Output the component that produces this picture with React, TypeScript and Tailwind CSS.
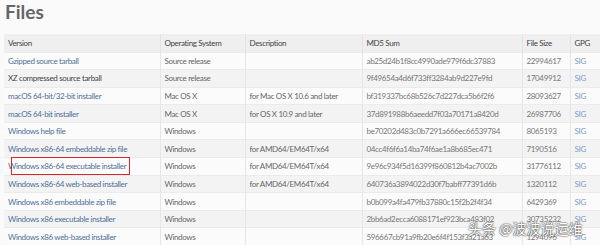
const rows: [string, boolean, string, string, string, string][] = [
  ['Gzipped source tarball', true, 'Source release', '', 'ab25d24b1f8cc4990ade979f6dc37883', '22994617'],
  ['XZ compressed source tarball', false, 'Source release', '', '9f49654a4d6f733ff3284ab9d227e9fd', '17049912'],
  ['macOS 64-bit/32-bit installer', true, 'Mac OS X', 'for Mac OS X 10.6 and later', 'bf319337bc68b526c7d227dca5b6f2f6', '28093627'],
  ['macOS 64-bit installer', true, 'Mac OS X', 'for OS X 10.9 and later', '37d891988b6aeedd7f03a70171a8420d', '26987706'],
  ['Windows help file', true, 'Windows', '', 'be70202d483c0b7291a666ec66539784', '8065193'],
  ['Windows x86-64 embeddable zip file', true, 'Windows', 'for AMD64/EM64T/x64', '04cc4f6f6a14ba74f6ae1a8b685ec471', '7190516'],
  ['Windows x86-64 executable installer', true, 'Windows', 'for AMD64/EM64T/x64', '9e96c934f5d16399f860812b4ac7002b', '31776112'],
  ['Windows x86-64 web-based installer', true, 'Windows', 'for AMD64/EM64T/x64', '640736a3894022d30f7babff77391d6b', '1320112'],
  ['Windows x86 embeddable zip file', true, 'Windows', '', 'b0b099a4fa479fb37880c15f2b2f4f34', '6429369'],
  ['Windows x86 executable installer', true, 'Windows', '', '2bb6ad2ecca6088171ef923bca483f02', '30735232'],
  ['Windows x86 web-based installer', true, 'Windows', '', '596667cb91a9fb20e6f4f153f3a21a63', '1294096'],
]

export default function App() {
  return (
    <div className="relative w-[600px] h-[245px] overflow-hidden bg-[#fafafa] font-['Lato','Liberation_Sans',sans-serif]">
      <div className="h-[34px] pl-[5px] pt-[1px] text-[19px] leading-[22px] font-bold text-[#666]">Files</div>
      <div className="ml-[4px] h-[211px] overflow-hidden">
        <table className="table-fixed border-collapse text-[8px] tracking-[-0.35px] w-[600px]">
          <colgroup>
            <col className="w-[156px]" />
            <col className="w-[85px]" />
            <col className="w-[117px]" />
            <col className="w-[160px]" />
            <col className="w-[48px]" />
            <col className="w-[34px]" />
          </colgroup>
          <thead>
            <tr className="h-[18px] bg-[#efefef] text-[#444] text-left">
              <th className="font-normal pl-[4px] border-r border-[#e2e2e2]">Version</th>
              <th className="font-normal pl-[4px] border-r border-[#e2e2e2]">Operating System</th>
              <th className="font-normal pl-[4px] border-r border-[#e2e2e2]">Description</th>
              <th className="font-normal pl-[4px] border-r border-[#e2e2e2]">MD5 Sum</th>
              <th className="font-normal pl-[4px] border-r border-[#e2e2e2]">File Size</th>
              <th className="font-normal pl-[4px]">GPG</th>
            </tr>
          </thead>
          <tbody>
            {rows.map(([name, link, os, desc, md5, size], i) => (
              <tr
                key={name}
                className={`h-[17.6px] border-t border-[#ebebeb] ${i % 2 === 0 ? 'bg-[#fbfbfb]' : 'bg-[#f3f3f3]'}`}
              >
                <td className="pl-[4px] border-r border-[#e6e6e6] whitespace-nowrap">
                  {i === 6 ? (
                    <span className="relative text-[#4f6f9a]">
                      {name}
                      <span className="absolute left-[3px] -right-[4px] -top-[4px] -bottom-[4px] border-[1.5px] border-[#d8262a]" />
                    </span>
                  ) : (
                    <span className={link ? 'text-[#4f6f9a]' : 'text-[#444]'}>{name}</span>
                  )}
                </td>
                <td className="pl-[4px] border-r border-[#e6e6e6] text-[#666]">{os}</td>
                <td className="pl-[4px] border-r border-[#e6e6e6] text-[#666] whitespace-nowrap">{desc}</td>
                <td className="pl-[4px] border-r border-[#e6e6e6] text-[#777] whitespace-nowrap">{md5}</td>
                <td className="pl-[4px] border-r border-[#e6e6e6] text-[#777]">{size}</td>
                <td className="pl-[4px] text-[#7d9cc8]">SIG</td>
              </tr>
            ))}
          </tbody>
        </table>
      </div>
      <div className="absolute left-[468px] top-[218px] whitespace-nowrap text-[14px] leading-[20px] text-white font-['Noto_Sans_CJK_SC',sans-serif] [text-shadow:0_0_2px_#333,0_0_1px_#333]">
        头条 @波波说运维
      </div>
    </div>
  )
}
